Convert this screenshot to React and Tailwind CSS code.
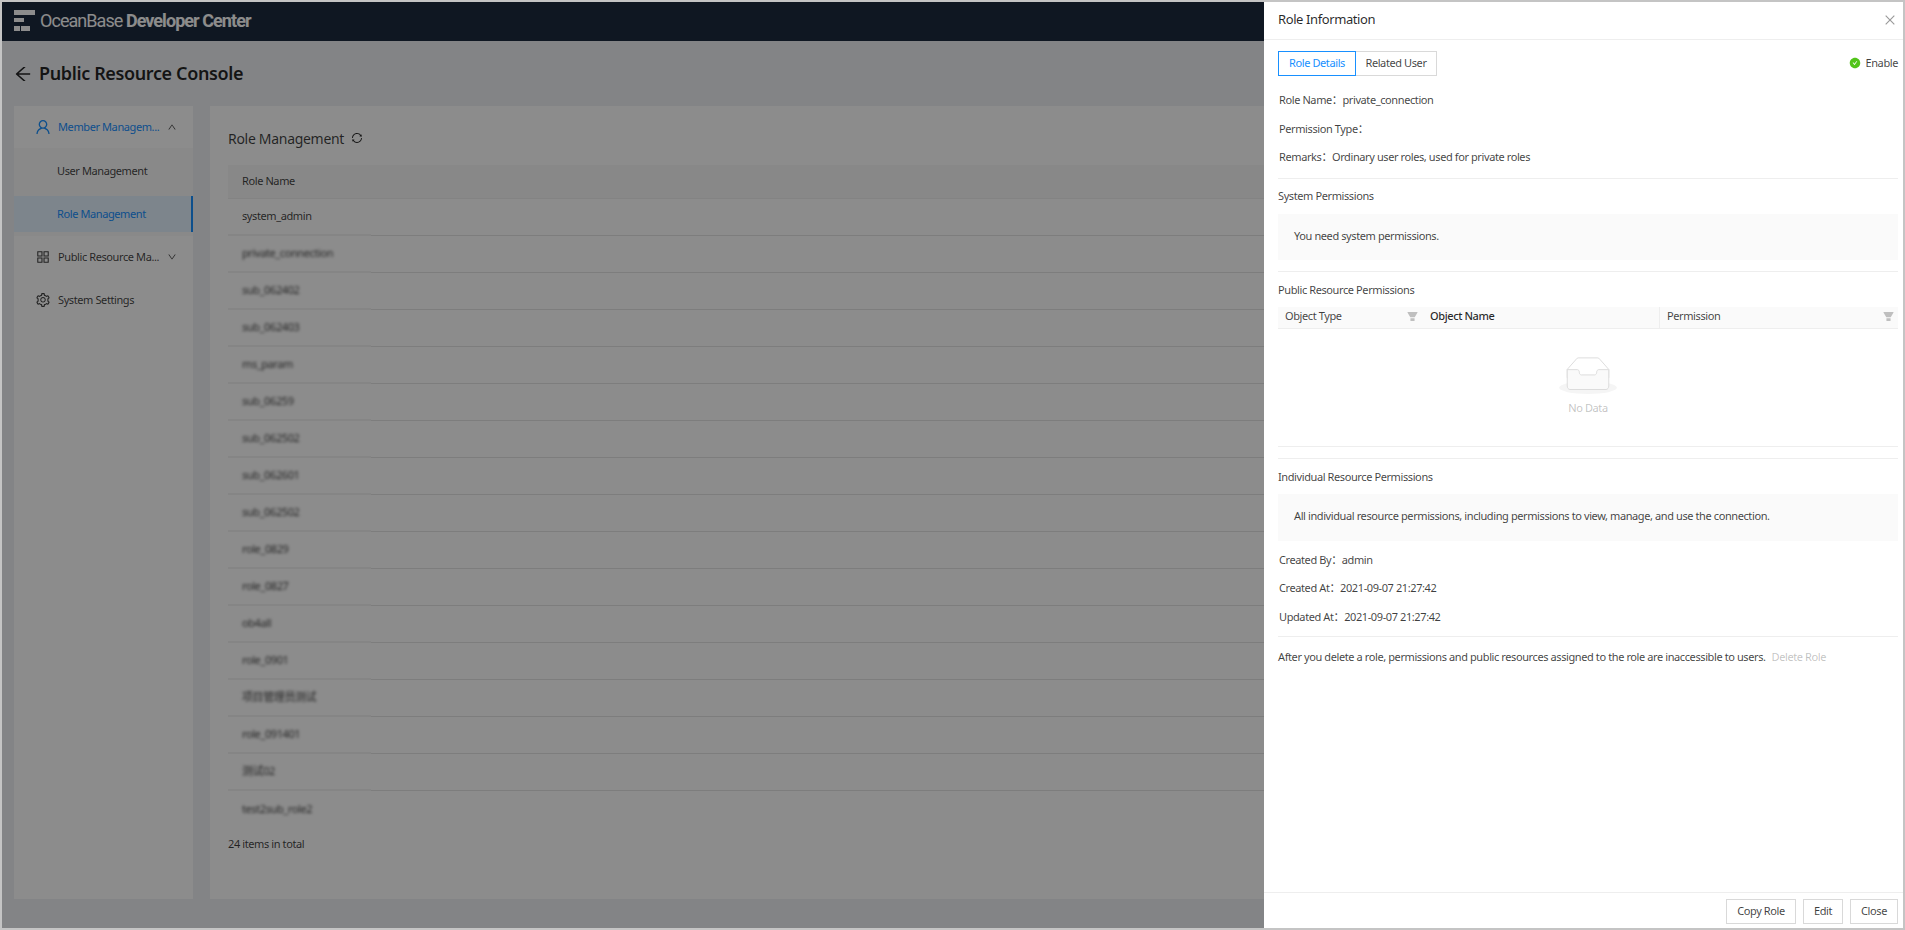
import {
  AiOutlineUser,
  AiOutlineAppstore,
  AiOutlineSetting,
  AiOutlineArrowLeft,
  AiOutlineSync,
  AiOutlineClose,
  AiFillCheckCircle,
  AiFillFilter,
  AiOutlineUp,
  AiOutlineDown,
} from 'react-icons/ai'

const ROLES = [
  'system_admin',
  'private_connection',
  'sub_062402',
  'sub_062403',
  'ms_param',
  'sub_06259',
  'sub_062502',
  'sub_062601',
  'sub_062502',
  'role_0829',
  'role_0827',
  'ob4all',
  'role_0901',
  '项目管理员测试',
  'role_091401',
  '测试02',
  'test2sub_role2',
]

function LogoMark() {
  return (
    <svg width="21" height="21" viewBox="0 0 21 21" fill="#ffffff">
      <rect x="0" y="0" width="21" height="5" />
      <rect x="0" y="8" width="10" height="4" />
      <rect x="0" y="16" width="6" height="5" />
      <rect x="7" y="16" width="9" height="5" />
    </svg>
  )
}

function EmptyIcon() {
  return (
    <svg width="58" height="37" viewBox="0 0 64 41">
      <g transform="translate(0 1)" fill="none" fillRule="evenodd">
        <ellipse fill="#f5f5f5" cx="32" cy="33" rx="32" ry="7" />
        <g fillRule="nonzero" stroke="#d9d9d9">
          <path d="M55 12.76L44.854 1.258C44.367.474 43.656 0 42.907 0H21.093c-.749 0-1.46.474-1.947 1.257L9 12.761V22h46v-9.24z" />
          <path
            d="M41.613 15.931c0-1.605.994-2.93 2.227-2.931H55v18.137C55 33.26 53.68 35 52.05 35h-40.1C10.32 35 9 33.259 9 31.137V13h11.16c1.233 0 2.227 1.323 2.227 2.928v.022c0 1.605 1.005 2.901 2.237 2.901h14.752c1.232 0 2.237-1.308 2.237-2.913v-.007z"
            fill="#fafafa"
          />
        </g>
      </g>
    </svg>
  )
}

function Sidebar() {
  return (
    <div className="w-[179px] bg-white text-[11px] tracking-[-0.4px] whitespace-nowrap text-black/75">
      <div className="h-[42px] flex items-center pl-[20px] text-[#1890ff]">
        <AiOutlineUser className="w-[18px] h-[18px]" />
        <span className="ml-[6px] w-[109px]">Member Managem...</span>
        <AiOutlineUp className="text-black/75 text-[10px]" />
      </div>
      <div className="bg-[#fafafa] pt-[5px] pb-[4px] flex flex-col gap-[7px]">
        <div className="h-[36px] flex items-center pl-[43px]">User Management</div>
        <div className="h-[36px] flex items-center pl-[43px] bg-[#e3f2ff] text-[#1890ff] border-r-2 border-[#1890ff]">
          Role Management
        </div>
      </div>
      <div className="h-[42px] flex items-center pl-[21px]">
        <AiOutlineAppstore className="w-[16px] h-[16px]" />
        <span className="ml-[7px] w-[109px]">Public Resource Ma...</span>
        <AiOutlineDown className="text-[10px]" />
      </div>
      <div className="h-[43px] pt-[1px] flex items-center pl-[21px]">
        <AiOutlineSetting className="w-[16px] h-[16px]" />
        <span className="ml-[7px]">System Settings</span>
      </div>
    </div>
  )
}

function RoleTable() {
  return (
    <div className="flex-1 bg-white px-[18px] pt-[21px] text-[11px] tracking-[-0.4px] text-black/75">
      <div className="flex items-center gap-[7px] h-[22px] mb-[16px] text-[14px] tracking-[-0.3px]">
        Role Management
        <AiOutlineSync className="text-[12px] text-black/85" />
      </div>
      <div className="h-[34px] flex items-center pl-[14px] bg-[#f7f7f7] border-b border-[#eeeeee]">Role Name</div>
      {ROLES.map((role, i) => (
        <div key={i} className="grid grid-cols-[143px_1fr] h-[37px]">
          <div className={`flex items-center pl-[14px] ${i < 16 ? 'border-b-2 border-[#f2f2f2]' : ''}`}>
            <span className={i === 0 ? '' : 'blur-[1.4px]'}>{role}</span>
          </div>
          <div className={i < 16 ? 'border-b border-[#e4e4e4]' : ''} />
        </div>
      ))}
      <div className="mt-[6px] leading-[20px]">24 items in total</div>
    </div>
  )
}

function Row({ label, children }) {
  return (
    <div className="h-[28.5px] flex items-center pl-[1px]">
      {label}：<span>{children}</span>
    </div>
  )
}

function Drawer() {
  return (
    <div className="absolute top-0 right-0 bottom-0 w-[639px] bg-white flex flex-col text-[11px] tracking-[-0.4px] text-black/75">
      <div className="h-[38px] shrink-0 flex items-center justify-between pl-[14px] pr-[6px] pb-[2px] border-b border-[#eeeeee]">
        <span className="text-[13px] tracking-[-0.4px] text-black/85">Role Information</span>
        <AiOutlineClose className="text-[14px] text-[#999999]" />
      </div>
      <div className="flex-1 pl-[14px] pr-[5px]">
        <div className="flex items-center justify-between pt-[11px] h-[36px]">
          <div className="flex h-[25px]">
            <div className="w-[78px] flex items-center justify-center border border-[#1890ff] text-[#1890ff]">Role Details</div>
            <div className="w-[81px] flex items-center justify-center border border-l-0 border-[#d9d9d9]">Related User</div>
          </div>
          <div className="flex items-center gap-[5px] -mt-[1px]">
            <AiFillCheckCircle className="text-[12px] text-[#52c41a]" />
            Enable
          </div>
        </div>
        <div className="pt-[10px] pb-[6px] border-b border-[#eeeeee]">
          <Row label="Role Name">private_connection</Row>
          <Row label="Permission Type" />
          <Row label="Remarks">Ordinary user roles, used for private roles</Row>
        </div>
        <div className="h-[35px] pt-[1px] flex items-center">System Permissions</div>
        <div className="h-[46px] flex items-center pl-[16px] bg-[#fafafa]">You need system permissions.</div>
        <div className="h-[12px] border-b border-[#eeeeee]" />
        <div className="h-[35px] pt-[3px] flex items-center">Public Resource Permissions</div>
        <div className="grid grid-cols-[381px_1fr] h-[22px] bg-[#fafafa] border-b border-[#eeeeee]">
          <div className="flex items-center pb-[1px]">
            <span className="pl-[7px] w-[142px] flex items-center justify-between pr-[1px]">
              Object Type
              <AiFillFilter className="text-[13px] text-[#bfbfbf]" />
            </span>
            <span className="ml-[10px] font-medium text-black/85">Object Name</span>
          </div>
          <div className="flex items-center justify-between border-l border-[#eeeeee] pl-[7px] pr-[3px] pb-[1px]">
            Permission
            <AiFillFilter className="text-[13px] text-[#bfbfbf]" />
          </div>
        </div>
        <div className="h-[118px] flex flex-col items-center pt-[28px] border-b border-[#eeeeee]">
          <EmptyIcon />
          <span className="mt-[6px] text-black/25">No Data</span>
        </div>
        <div className="h-[12px] border-b border-[#eeeeee]" />
        <div className="h-[35px] pt-[3px] flex items-center">Individual Resource Permissions</div>
        <div className="h-[47px] flex items-center pl-[16px] pb-[1px] bg-[#fafafa]">
          All individual resource permissions, including permissions to view, manage, and use the connection.
        </div>
        <div className="pt-[5px] pb-[5px] border-b border-[#eeeeee]">
          <Row label="Created By">admin</Row>
          <Row label="Created At">2021-09-07 21:27:42</Row>
          <Row label="Updated At">2021-09-07 21:27:42</Row>
        </div>
        <div className="h-[41px] flex items-center gap-[6px] whitespace-nowrap">
          After you delete a role, permissions and public resources assigned to the role are inaccessible to users.
          <span className="text-black/25">Delete Role</span>
        </div>
      </div>
      <div className="h-[36px] shrink-0 border-t border-[#eeeeee] flex items-center justify-end gap-[7px] pr-[5px] pt-[1px]">
        <button className="h-[25px] w-[70px] border border-[#d9d9d9]">Copy Role</button>
        <button className="h-[25px] w-[40px] border border-[#d9d9d9]">Edit</button>
        <button className="h-[25px] w-[48px] border border-[#d9d9d9]">Close</button>
      </div>
    </div>
  )
}

export default function App() {
  return (
    <div
      className="w-[1905px] h-[930px] border-2 border-[#c4c4c4] overflow-hidden"
      style={{ fontFamily: '"Noto Sans", "Noto Sans CJK SC", sans-serif' }}
    >
      <div className="relative w-full h-full bg-[#eff1f4] flex flex-col">
        <div className="h-[39px] shrink-0 bg-[#1d2b3f] flex items-center pl-[12px] pb-[3px]">
          <LogoMark />
          <span className="ml-[5px] text-[18px] text-white tracking-[-0.95px]" style={{ fontFamily: 'Roboto, sans-serif' }}>
            OceanBase <b className="font-bold">Developer Center</b>
          </span>
        </div>
        <div className="h-[65px] shrink-0 flex items-center pl-[11px] text-[18px] tracking-[-0.37px] font-semibold text-black/85">
          <AiOutlineArrowLeft className="text-[20px] mr-[6px]" />
          Public Resource Console
        </div>
        <div className="flex-1 flex gap-[17px] pl-[12px] pr-[12px] pb-[29px]">
          <Sidebar />
          <RoleTable />
        </div>
        <div className="absolute inset-0 bg-black/45" />
        <Drawer />
      </div>
    </div>
  )
}
